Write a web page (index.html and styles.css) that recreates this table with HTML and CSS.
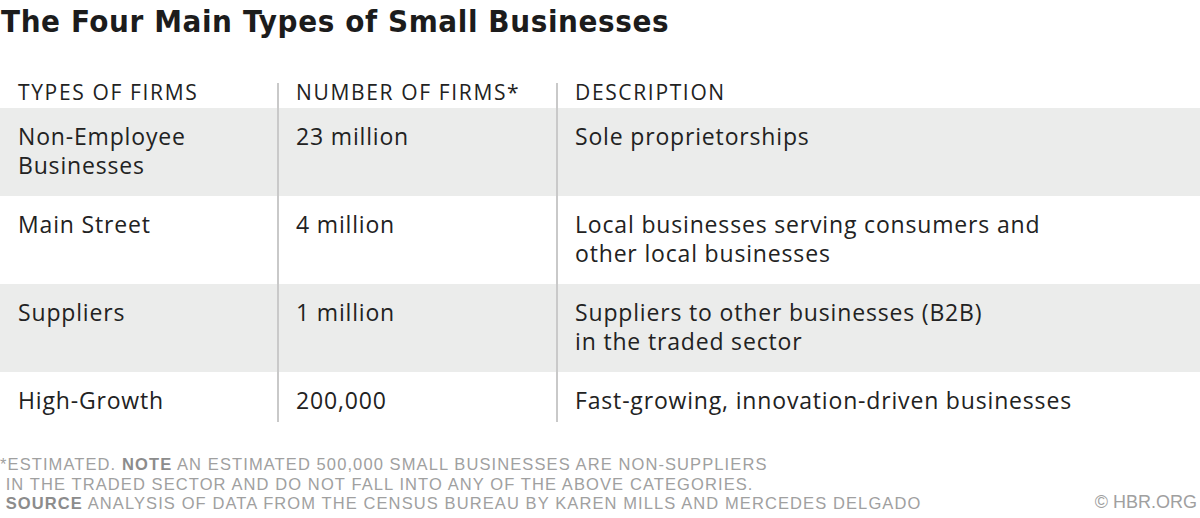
FILE: index.html
```html
<!DOCTYPE html>
<html>
<head>
<meta charset="utf-8">
<link rel="stylesheet" href="styles.css">
</head>
<body>
<h1 class="title">The Four Main Types of Small Businesses</h1>
<div class="table">
  <div class="row head">
    <div class="cell c1">TYPES OF FIRMS</div>
    <div class="cell c2">NUMBER OF FIRMS*</div>
    <div class="cell c3">DESCRIPTION</div>
  </div>
  <div class="row grey">
    <div class="cell c1">Non-Employee<br>Businesses</div>
    <div class="cell c2">23 million</div>
    <div class="cell c3">Sole proprietorships</div>
  </div>
  <div class="row">
    <div class="cell c1">Main Street</div>
    <div class="cell c2">4 million</div>
    <div class="cell c3">Local businesses serving consumers and<br>other local businesses</div>
  </div>
  <div class="row grey">
    <div class="cell c1">Suppliers</div>
    <div class="cell c2">1 million</div>
    <div class="cell c3">Suppliers to other businesses (B2B)<br>in the traded sector</div>
  </div>
  <div class="row last">
    <div class="cell c1">High-Growth</div>
    <div class="cell c2">200,000</div>
    <div class="cell c3">Fast-growing, innovation-driven businesses</div>
  </div>
</div>
<div class="footer">
  <div class="notes">
    <div>*ESTIMATED. <b>NOTE</b> AN ESTIMATED 500,000 SMALL BUSINESSES ARE NON-SUPPLIERS</div>
    <div>&nbsp;IN THE TRADED SECTOR AND DO NOT FALL INTO ANY OF THE ABOVE CATEGORIES.</div>
    <div>&nbsp;<b>SOURCE</b> ANALYSIS OF DATA FROM THE CENSUS BUREAU BY KAREN MILLS AND MERCEDES DELGADO</div>
  </div>
  <div class="credit">© HBR.ORG</div>
</div>
</body>
</html>
```
FILE: styles.css
```css
html, body {
  margin: 0;
  padding: 0;
  background: #ffffff;
}
body {
  width: 1200px;
  height: 518px;
  overflow: hidden;
  font-family: "Open Sans", "DejaVu Sans", sans-serif;
  color: #222222;
}
.title {
  margin: 0;
  padding: 0 0 0 1px;
  font-family: "DejaVu Sans Condensed", "DejaVu Sans", sans-serif;
  font-weight: bold;
  font-size: 31px;
  line-height: 42px;
  letter-spacing: 0.6px;
  color: #1c1c1c;
}
.table {
  margin-top: 41px;
}
.row {
  display: grid;
  grid-template-columns: 277px 279px 1fr;
}
.row.grey {
  background: #ebeceb;
}
.cell {
  font-size: 23px;
  line-height: 29px;
  letter-spacing: 0.83px;
  padding: 14px 0 16px 18px;
}
.c2, .c3 {
  border-left: 2px solid #c9c9c9;
  padding-left: 17px;
}
.head .cell {
  font-size: 21px;
  line-height: 18px;
  letter-spacing: 1.65px;
  padding-top: 0;
  padding-bottom: 7px;
}
.last .cell {
  padding-bottom: 7px;
}
.footer {
  margin-top: 33px;
  display: flex;
  justify-content: space-between;
  align-items: flex-end;
  color: #a0a0a0;
}
.notes {
  font-family: "Liberation Sans", sans-serif;
  font-size: 16.5px;
  line-height: 19.5px;
  letter-spacing: 1.1px;
}
.notes b {
  color: #8c8c8c;
}
.credit {
  font-family: "Liberation Sans", sans-serif;
  font-size: 18px;
  line-height: 19.5px;
  padding-right: 3px;
  padding-bottom: 1px;
}
```
